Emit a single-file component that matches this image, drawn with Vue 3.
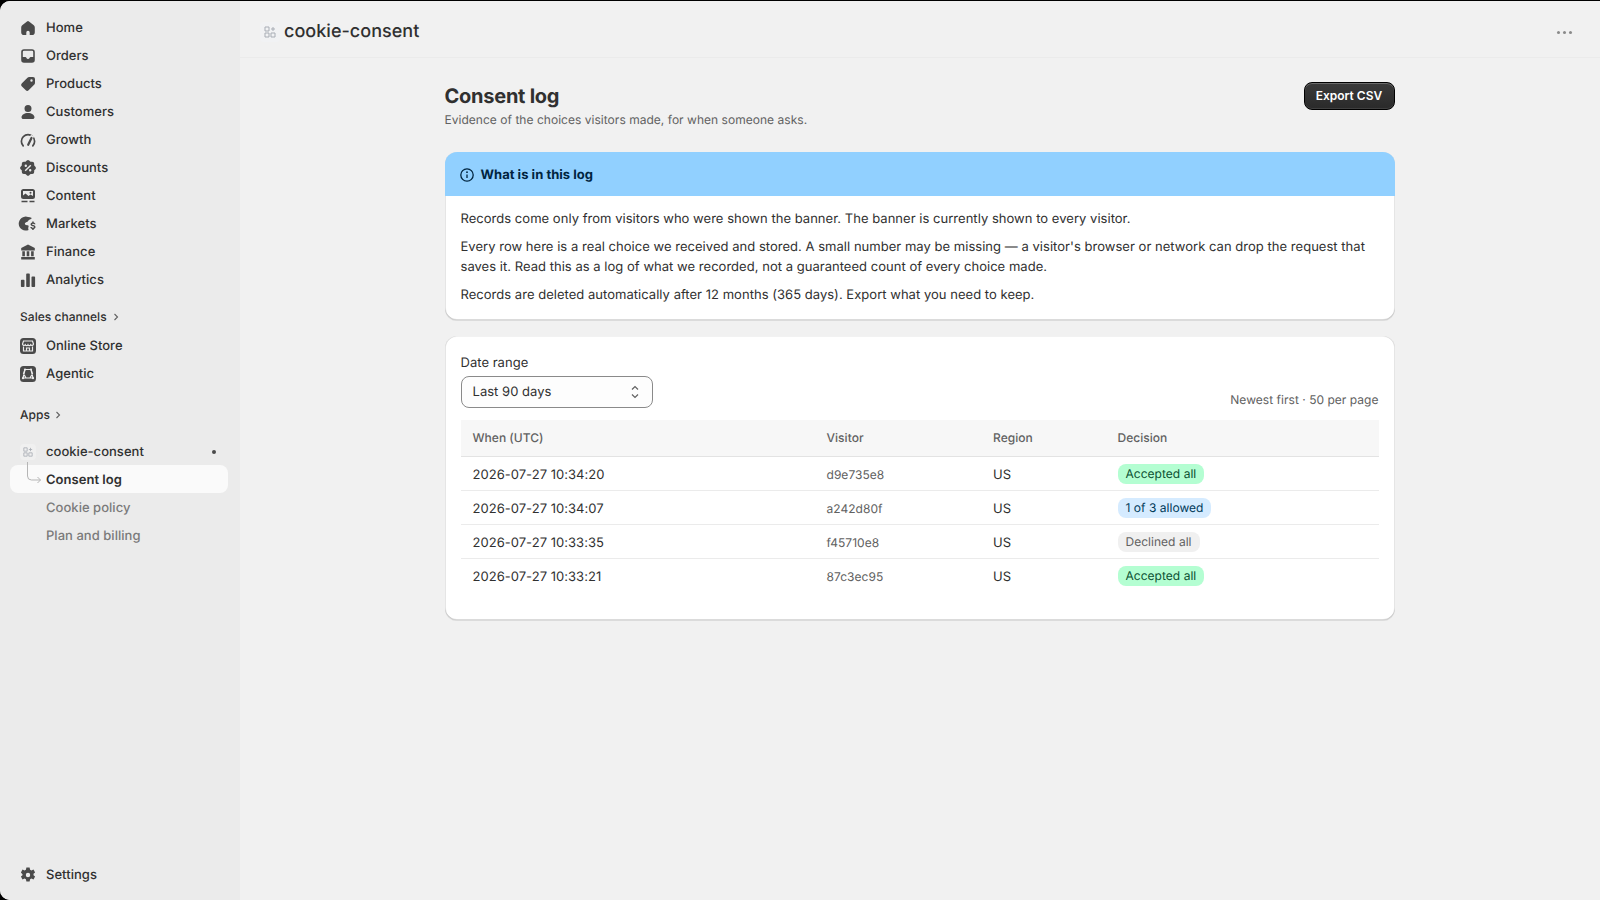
<script setup>
const mainNav = [
  { label: "Home", icon: "home" },
  { label: "Orders", icon: "orders" },
  { label: "Products", icon: "products" },
  { label: "Customers", icon: "customers" },
  { label: "Growth", icon: "growth" },
  { label: "Discounts", icon: "discounts" },
  { label: "Content", icon: "content" },
  { label: "Markets", icon: "markets" },
  { label: "Finance", icon: "finance" },
  { label: "Analytics", icon: "analytics" },
];

const iconPaths = {
  home: "M11 3.400a1.600 1.600 0 0 0-2 0L4.200 7.200A2.800 2.800 0 0 0 3.200 9.400v4.800A2.800 2.800 0 0 0 6 17h2.300v-2.500a1.700 1.700 0 0 1 3.400 0V17H14a2.800 2.800 0 0 0 2.800-2.800V9.400a2.800 2.800 0 0 0-1-2.200z",
  orders: "M6 3.200h8A2.800 2.800 0 0 1 16.800 6v8a2.800 2.800 0 0 1-2.800 2.800H6A2.800 2.800 0 0 1 3.200 14V6A2.800 2.800 0 0 1 6 3.200zM6 4.800A1.200 1.200 0 0 0 4.800 6v5h2.400c.7 0 1.100.4 1.300.9.2.6.7 1 1.500 1s1.300-.4 1.500-1c.2-.5.6-.9 1.300-.9h2.400V6A1.200 1.200 0 0 0 14 4.800z",
  products: "M11.300 3H15a2 2 0 0 1 2 2v3.700c0 .8-.3 1.500-.9 2.100l-5.500 5.500a2 2 0 0 1-2.800 0l-4.100-4.100a2 2 0 0 1 0-2.800l5.500-5.500c.6-.6 1.300-.9 2.100-.9zM13.500 5.300a1.200 1.200 0 1 0 0 2.400 1.200 1.200 0 0 0 0-2.400z",
  customers: "M10 3a3.500 3.500 0 1 1 0 7 3.500 3.500 0 0 1 0-7zM10 11c-3.700 0-6.200 1.800-6.500 3.900-.1 1.100.8 2.100 2 2.100h9c1.200 0 2.100-1 2-2.100-.3-2.100-2.800-3.900-6.500-3.900z",
  discounts: "M11.200 2.600l1 .9a1 1 0 0 0 .7.3h1.300a2 2 0 0 1 2 2v1.300a1 1 0 0 0 .3.7l.9 1a1.700 1.700 0 0 1 0 2.400l-.9.9a1 1 0 0 0-.3.7v1.200a2 2 0 0 1-2 2h-1.300a1 1 0 0 0-.7.3l-1 .9a1.700 1.700 0 0 1-2.400 0l-1-.9a1 1 0 0 0-.7-.3H5.800a2 2 0 0 1-2-2v-1.200a1 1 0 0 0-.3-.7l-.9-.9a1.700 1.700 0 0 1 0-2.400l.9-1a1 1 0 0 0 .3-.7V5.800a2 2 0 0 1 2-2h1.300a1 1 0 0 0 .7-.3l1-.9a1.700 1.700 0 0 1 2.400 0zM12.300 6.700L6.700 12.300l1 1 5.600-5.600zM7.800 6.500a1.200 1.200 0 1 0 0 2.400 1.200 1.200 0 0 0 0-2.400zM12.200 11.100a1.200 1.200 0 1 0 0 2.400 1.200 1.200 0 0 0 0-2.400z",
  content: "M5.500 3h9A2.500 2.500 0 0 1 17 5.500v5a2.500 2.500 0 0 1-2.500 2.500h-9A2.500 2.500 0 0 1 3 10.500v-5A2.500 2.500 0 0 1 5.500 3zM5 5v4.500l2.500-2 3 2.500 2-1.500L15 10V5zM12.500 5.800a1 1 0 1 0 0 2 1 1 0 0 0 0-2zM3.500 14.700h6v1.500h-6zM11.500 14.700h5v1.500h-5z",
  markets: "M10 3a7 7 0 0 1 3.800 1.100c-.6 1-1.800 1.400-2.800 1.900-.8.4-.8 1.300-1.500 1.800-.9.6-2 .5-2.500 1.500-.4.8.2 1.500 1 1.800 1 .3 2-.3 2.500.7.3.6 0 1.200-.2 1.800-.2.8 0 1.700.3 2.400A7 7 0 1 1 10 3zM14.200 7.500h1.500v1c1 .2 1.800.9 1.800 1.800h-1.500c0-.4-.4-.6-1-.6s-1 .2-1 .6.4.6 1.200.8c1.300.3 2.300.8 2.300 2 0 1-.8 1.700-1.800 1.900v1h-1.500v-1c-1.100-.2-1.900-.9-1.900-1.900h1.500c0 .4.500.7 1.200.7.600 0 1-.3 1-.7s-.5-.6-1.300-.8c-1.200-.3-2.200-.8-2.200-2 0-.9.800-1.600 1.700-1.800z",
  finance: "M10 2.600l6.800 3.500v2.400H3.200V6.100zM4.300 9.300h2.600v4.900H4.300zM8.700 9.300h2.600v4.900H8.700zM13.100 9.300h2.600v4.900h-2.600zM3.200 15h13.600v2.400H3.200z",
  analytics: "M9 3.500h2a.8.8 0 0 1 .8.8v12a.8.8 0 0 1-.8.8H9a.8.8 0 0 1-.8-.8v-12A.8.8 0 0 1 9 3.500zM14.300 6.500h2a.8.8 0 0 1 .8.8v9a.8.8 0 0 1-.8.8h-2a.8.8 0 0 1-.8-.8v-9a.8.8 0 0 1 .8-.8zM3.700 9.800h2a.8.8 0 0 1 .8.8v5.700a.8.8 0 0 1-.8.8h-2a.8.8 0 0 1-.8-.8v-5.700a.8.8 0 0 1 .8-.8z",
};

const rows = [
  { when: "2026-07-27 10:34:20", visitor: "d9e735e8", region: "US", decision: "Accepted all", tone: "green" },
  { when: "2026-07-27 10:34:07", visitor: "a242d80f", region: "US", decision: "1 of 3 allowed", tone: "blue" },
  { when: "2026-07-27 10:33:35", visitor: "f45710e8", region: "US", decision: "Declined all", tone: "grey" },
  { when: "2026-07-27 10:33:21", visitor: "87c3ec95", region: "US", decision: "Accepted all", tone: "green" },
];
</script>

<template>
  <div class="frame">
    <aside class="sidebar">
      <nav class="nav-list">
        <a v-for="item in mainNav" :key="item.label" class="nav-row">
          <svg v-if="item.icon === 'growth'" class="icon" viewBox="0 0 20 20">
            <path class="gauge" d="M5.200 15.800A6.600 6.600 0 1 1 14.800 15.800" />
            <path class="needle-gap" d="M14.500 5.500L10.500 14" />
            <path class="needle" d="M13.500 8L10.200 14.800" />
          </svg>
          <svg v-else class="icon" viewBox="0 0 20 20"><path :d="iconPaths[item.icon]" fill-rule="evenodd" /></svg>
          <span>{{ item.label }}</span>
        </a>
      </nav>

      <div class="section-label channels">
        Sales channels
        <svg class="chev" viewBox="0 0 8 8"><path d="M2.500 1l3 3-3 3" /></svg>
      </div>
      <a class="nav-row">
        <svg class="icon" viewBox="0 0 20 20">
          <rect x="2" y="2" width="16" height="16" rx="3.500" />
          <path class="cut-line" d="M5.500 5h9l1 3a1.500 1.500 0 0 1-2.800.7 1.500 1.500 0 0 1-2.700 0 1.500 1.500 0 0 1-2.700 0A1.500 1.500 0 0 1 4.500 8zM5.500 10.500v4.500h9v-4.500M8.500 15v-3h3v3" />
        </svg>
        <span>Online Store</span>
      </a>
      <a class="nav-row">
        <svg class="icon" viewBox="0 0 20 20">
          <rect x="2" y="2" width="16" height="16" rx="3.500" />
          <path class="cut-line" d="M7 5.500h6l2 8.500H5zM7 5.500L5.500 9.500 8 14M13 5.500l1.500 4L12 14" />
          <circle class="cut" cx="7" cy="5.500" r="1.100" />
          <circle class="cut" cx="13" cy="5.500" r="1.100" />
          <circle class="cut" cx="5" cy="14.200" r="1.100" />
          <circle class="cut" cx="15" cy="14.200" r="1.100" />
        </svg>
        <span>Agentic</span>
      </a>

      <div class="section-label apps">
        Apps
        <svg class="chev" viewBox="0 0 8 8"><path d="M2.500 1l3 3-3 3" /></svg>
      </div>

      <a class="nav-row app-row">
        <span class="app-icon small">
          <svg viewBox="0 0 12 12"><path d="M1 1h4v4H1zM7 7h4v4H7zM1 7h4v4H1zM9 1v4M7 3h4" /></svg>
        </span>
        <span>cookie-consent</span>
        <i class="pin-dot"></i>
      </a>
      <a class="nav-row sub active">
        <svg class="tree" viewBox="0 0 16 24">
          <path d="M1.500 0v14a4 4 0 0 0 4 4h9M11.500 15l3 3-3 3" />
        </svg>
        <span>Consent log</span>
      </a>
      <a class="nav-row sub muted"><span>Cookie policy</span></a>
      <a class="nav-row sub muted"><span>Plan and billing</span></a>

      <a class="nav-row settings">
        <svg class="icon" viewBox="0 0 20 20">
          <path fill-rule="evenodd" d="M8.400 2.500h3.200l.5 2.200 1.300.7 2.100-.8 1.600 2.800-1.600 1.400v1.400l1.600 1.400-1.600 2.800-2.100-.8-1.300.7-.5 2.200H8.400l-.5-2.200-1.300-.7-2.100.8-1.600-2.800 1.600-1.400V9.300L2.900 7.400l1.600-2.800 2.100.8 1.300-.7zM10 7.800a2.200 2.200 0 1 0 0 4.400 2.200 2.200 0 0 0 0-4.400z" />
        </svg>
        <span>Settings</span>
      </a>
    </aside>

    <div class="main">
      <header class="topbar">
        <div class="topbar-title">
          <span class="app-icon">
            <svg viewBox="0 0 12 12"><path d="M1 1h4v4H1zM7 7h4v4H7zM1 7h4v4H1zM9 1v4M7 3h4" /></svg>
          </span>
          <span>cookie-consent</span>
        </div>
        <div class="dots"><i></i><i></i><i></i></div>
      </header>

      <main class="content">
        <div class="page-head">
          <div>
            <h1>Consent log</h1>
            <p>Evidence of the choices visitors made, for when someone asks.</p>
          </div>
          <button class="export">Export CSV</button>
        </div>

        <section class="card banner">
          <div class="banner-head">
            <svg class="info" viewBox="0 0 14 14">
              <circle cx="7" cy="7" r="6.200" />
              <path d="M7 6.500v3.500" />
              <circle class="info-dot" cx="7" cy="4.200" r=".9" />
            </svg>
            <h2>What is in this log</h2>
          </div>
          <div class="banner-body">
            <p>Records come only from visitors who were shown the banner. The banner is currently shown to every visitor.</p>
            <p>Every row here is a real choice we received and stored. A small number may be missing — a visitor's browser or network can drop the request that saves it. Read this as a log of what we recorded, not a guaranteed count of every choice made.</p>
            <p>Records are deleted automatically after 12 months (365 days). Export what you need to keep.</p>
          </div>
        </section>

        <section class="card log">
          <div class="filters">
            <div>
              <label>Date range</label>
              <div class="select">
                <span>Last 90 days</span>
                <svg viewBox="0 0 12 20"><path d="M3 7.500L6 4.500l3 3M3 12.500l3 3 3-3" /></svg>
              </div>
            </div>
            <span class="meta">Newest first · 50 per page</span>
          </div>

          <table>
            <colgroup>
              <col class="c-when" /><col class="c-visitor" /><col class="c-region" /><col />
            </colgroup>
            <thead>
              <tr><th>When (UTC)</th><th>Visitor</th><th>Region</th><th>Decision</th></tr>
            </thead>
            <tbody>
              <tr v-for="row in rows" :key="row.when">
                <td class="text">{{ row.when }}</td>
                <td class="text visitor">{{ row.visitor }}</td>
                <td class="text">{{ row.region }}</td>
                <td><span class="badge" :class="row.tone">{{ row.decision }}</span></td>
              </tr>
            </tbody>
          </table>
        </section>
      </main>
    </div>
  </div>
</template>

<style>
html,
body {
  margin: 0;
  background: #000;
}
</style>

<style scoped>
.frame {
  display: flex;
  height: 899px;
  margin-top: 1px;
  overflow: hidden;
  border-radius: 10px 0 0 10px;
  background: #f1f1f1;
  font-family: Inter, "Liberation Sans", sans-serif;
  font-size: 13px;
  font-weight: 440;
  line-height: 20px;
  letter-spacing: .03px;
  color: #303030;
  text-rendering: geometricPrecision;
}

.sidebar {
  box-sizing: border-box;
  width: 240px;
  flex: none;
  display: flex;
  flex-direction: column;
  padding: 13px 12px 11px 10px;
  background: #ebebeb;
}

.nav-list {
  display: flex;
  flex-direction: column;
}

.nav-row {
  box-sizing: border-box;
  position: relative;
  display: flex;
  align-items: center;
  gap: 8px;
  height: 28px;
  padding-left: 8px;
  font-weight: 500;
  border-radius: 8px;
}

.icon {
  width: 20px;
  height: 20px;
  flex: none;
  fill: #4a4a4a;
}

.icon .cut {
  fill: #ebebeb;
}

.icon .cut-line {
  fill: none;
  stroke: #ebebeb;
  stroke-width: 1.200;
}

.icon .gauge {
  fill: none;
  stroke: #4a4a4a;
  stroke-width: 1.700;
  stroke-linecap: round;
}

.icon .needle-gap {
  fill: none;
  stroke: #ebebeb;
  stroke-width: 3.500;
}

.icon .needle {
  fill: none;
  stroke: #4a4a4a;
  stroke-width: 2.200;
  stroke-linecap: round;
}

.section-label {
  display: flex;
  align-items: center;
  gap: 5px;
  height: 28px;
  padding-left: 10px;
  font-size: 12px;
  font-weight: 500;
}

.channels {
  margin-top: 9px;
  margin-bottom: 1px;
}

.apps {
  margin-top: 13px;
  margin-bottom: 8px;
  gap: 4px;
}

.chev {
  width: 8px;
  height: 8px;
  fill: none;
  stroke: #616161;
  stroke-width: 1.100;
}

.app-icon {
  display: flex;
  align-items: center;
  justify-content: center;
  width: 20px;
  height: 20px;
  flex: none;
  border-radius: 4px;
  background: #f1f2f4;
}

.app-icon svg {
  width: 12px;
  height: 12px;
  fill: none;
  stroke: #a8adb5;
  stroke-width: 1;
}

.app-icon.small {
  width: 16px;
  height: 16px;
  margin: 0 2px;
  background: #f0f0f0;
}

.app-icon.small svg {
  width: 10px;
  height: 10px;
}

.app-row {
  padding-top: 2px;
}

.pin-dot {
  position: absolute;
  top: 13px;
  left: 202px;
  width: 4px;
  height: 4px;
  border-radius: 50%;
  background: #4a4a4a;
}

.sub {
  padding-left: 36px;
  padding-top: 2px;
}

.active {
  background: #fafafa;
  font-weight: 600;
  color: #303030;
}

.muted {
  color: #7a7a7a;
  font-weight: 450;
}

.tree {
  position: absolute;
  left: 16px;
  top: -3px;
  width: 16px;
  height: 24px;
  fill: none;
  stroke: #b5b5b5;
  stroke-width: 1;
}

.settings {
  margin-top: auto;
}

.main {
  flex: 1;
  min-width: 0;
  display: flex;
  flex-direction: column;
}

.topbar {
  box-sizing: border-box;
  display: flex;
  align-items: center;
  justify-content: space-between;
  height: 57px;
  padding: 6px 19px 0 20px;
  border-bottom: 1px solid #ebebeb;
}

.topbar-title {
  display: flex;
  align-items: center;
  gap: 4px;
  font-size: 18px;
  font-weight: 500;
}

.dots {
  display: flex;
  gap: 2px;
  margin-right: 8px;
}

.dots i {
  width: 3px;
  height: 3px;
  margin-right: 1px;
  border-radius: 50%;
  background: #8a8a8a;
}

.content {
  box-sizing: border-box;
  width: 950px;
  margin: 0 205px 0 204.5px;
  padding-top: 24px;
  display: flex;
  flex-direction: column;
  gap: 17px;
}

.page-head {
  display: flex;
  justify-content: space-between;
  align-items: flex-start;
  margin-bottom: 5px;
}

h1 {
  margin: 0;
  font-size: 20px;
  line-height: 28px;
  font-weight: 650;
  letter-spacing: -.25px;
  color: #303030;
}

.page-head p {
  margin: 0;
  font-size: 12px;
  line-height: 20px;
  color: #616161;
}

.export {
  box-sizing: border-box;
  width: 91px;
  height: 28px;
  border: 1px solid #000;
  border-radius: 8px;
  background: linear-gradient(#3a3a3a, #2a2a2a);
  box-shadow: inset 0 1px 0 rgba(255, 255, 255, .25), inset 0 -1px 0 rgba(255, 255, 255, .1);
  color: #fff;
  font: 600 12px/20px Inter, "Liberation Sans", sans-serif;
}

.card {
  overflow: hidden;
  border-radius: 12px;
  background: #fff;
  box-shadow: 0 1px 0 rgba(26, 26, 26, .1), inset 1px 0 0 rgba(0, 0, 0, .1), inset -1px 0 0 rgba(0, 0, 0, .1), inset 0 1px 0 rgba(0, 0, 0, .05), inset 0 -1px 0 rgba(0, 0, 0, .14);
}

.banner {
  margin-bottom: -1px;
}

.banner-head {
  box-sizing: border-box;
  display: flex;
  align-items: center;
  gap: 7px;
  height: 44px;
  padding: 1px 0 0 15px;
  background: #91d0ff;
}

.info {
  width: 14px;
  height: 14px;
  fill: none;
  stroke: #00243f;
  stroke-width: 1.300;
}

.info-dot {
  fill: #00243f;
  stroke: none;
}

h2 {
  margin: 0;
  font-size: 13px;
  line-height: 20px;
  font-weight: 650;
  color: #00243f;
}

.banner-body {
  display: flex;
  flex-direction: column;
  gap: 8px;
  padding: 13px 16px 15px;
}

.banner-body p {
  margin: 0;
}

.log {
  padding: 17px 16px 27px;
}

.filters {
  display: flex;
  justify-content: space-between;
  align-items: flex-end;
  margin-bottom: 12px;
}

label {
  display: block;
  margin-bottom: 3px;
}

.select {
  box-sizing: border-box;
  display: flex;
  align-items: center;
  justify-content: space-between;
  width: 192px;
  height: 32px;
  padding: 0 11px 0 11px;
  border: 1px solid #8a8a8a;
  border-radius: 8px;
  background: #fdfdfd;
}

.select svg {
  width: 12px;
  height: 20px;
  fill: none;
  stroke: #616161;
  stroke-width: 1.200;
}

.meta {
  font-size: 12px;
  color: #616161;
  margin-bottom: -2px;
}

table {
  width: 100%;
  table-layout: fixed;
  border-collapse: collapse;
}

.c-when {
  width: 354px;
}

.c-visitor {
  width: 166.5px;
}

.c-region {
  width: 124.5px;
}

th {
  height: 36px;
  padding: 0 12px;
  text-align: left;
  font-size: 12px;
  font-weight: 550;
  color: #616161;
  background: #f7f7f7;
  border-bottom: 1px solid #e3e3e3;
}

td {
  box-sizing: border-box;
  height: 34px;
  padding: 0 12px;
  border-bottom: 1px solid #ebebeb;
}

td.text {
  padding-top: 2px;
}

tr:last-child td {
  border-bottom: 0;
}

.visitor {
  font-size: 12px;
  color: #616161;
}

.badge {
  display: inline-block;
  height: 20px;
  padding: 0 8px;
  border-radius: 8px;
  font-size: 12px;
  line-height: 20px;
  vertical-align: middle;
}

.green {
  background: #b4fed2;
  color: #0c5132;
}

.blue {
  background: #d5ebff;
  color: #003a5a;
}

.grey {
  background: #f0f0f0;
  color: #616161;
}
</style>
